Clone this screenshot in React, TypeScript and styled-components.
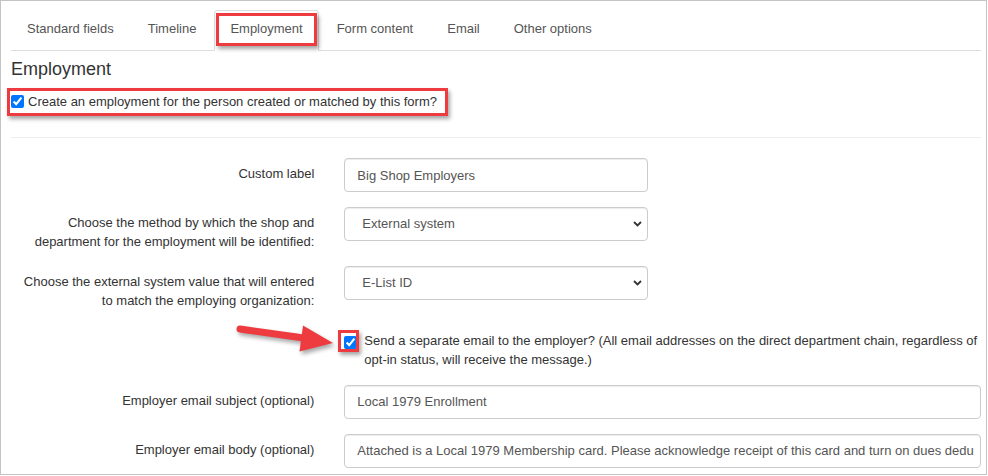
import React from "react";
import styled, { createGlobalStyle, css } from "styled-components";

const GlobalStyle = createGlobalStyle`
  html, body { margin: 0; padding: 0; background: #fff; }
  body {
    font-family: "Liberation Sans", Arial, Helvetica, sans-serif;
    font-size: 13px;
    line-height: 1.42857;
    color: #333;
  }
  *, *::before, *::after { box-sizing: border-box; }
`;

const Frame = styled.div`
  width: 987px;
  height: 475px;
  border: 1px solid #c4c4c4;
  padding: 9px 5px 0 10px;
  overflow: hidden;
  background: #fff;
`;

const Tabs = styled.ul`
  display: flex;
  list-style: none;
  margin: 0;
  padding: 0;
  border-bottom: 1px solid #ddd;
`;

const TabItem = styled.li`
  margin: 0 2px -1px 0;
`;

const TabLink = styled.a<{ $active?: boolean }>`
  position: relative;
  display: block;
  padding: 9px 15px 11px;
  border: 1px solid transparent;
  border-radius: 4px 4px 0 0;
  color: #555;
  text-decoration: none;
  cursor: pointer;
  ${(p) =>
    p.$active &&
    css`
      border-color: #ddd #ddd transparent;
      background: #fff;
    `}
`;

const Annot = styled.span<{ $t: number; $r: number; $b: number; $l: number }>`
  position: absolute;
  top: ${(p) => p.$t}px;
  right: ${(p) => p.$r}px;
  bottom: ${(p) => p.$b}px;
  left: ${(p) => p.$l}px;
  border: 3px solid #ee3b3f;
  box-shadow: 2px 3px 4px rgba(0, 0, 0, 0.35);
  pointer-events: none;
`;

const Heading = styled.h4`
  margin: 8px 0 14px;
  font-size: 18px;
  font-weight: normal;
  line-height: 20px;
  color: #333;
`;

const TopCheck = styled.label`
  position: relative;
  display: inline-flex;
  align-items: flex-start;
  gap: 4px;
  font-weight: normal;
  vertical-align: top;
`;

const CheckInput = styled.input<{ $mt: number }>`
  display: block;
  flex: none;
  width: 13px;
  height: 13px;
  margin: ${(p) => p.$mt}px 0 0;
`;

const Divider = styled.hr`
  margin: 26px 0 20px;
  border: 0;
  border-top: 1px solid #eee;
`;

const FormGroup = styled.div`
  display: grid;
  grid-template-columns: 333.333px 1fr;
  margin: 0 -15px 15px;
`;

const ControlLabel = styled.label`
  padding: 7px 15px 0;
  text-align: right;
  font-weight: normal;
  color: #333;
`;

const Control = styled.div<{ $padTop?: number }>`
  position: relative;
  padding: ${(p) => p.$padTop ?? 0}px 15px 0;
`;

const TextInput = styled.input<{ $narrow?: boolean }>`
  display: block;
  width: ${(p) => (p.$narrow ? "304px" : "100%")};
  height: 34px;
  padding: 6px 6px 6px 12px;
  font: inherit;
  color: #555;
  background: #fff;
  border: 1px solid #ccc;
  border-radius: 4px;
  box-shadow: inset 0 1px 1px rgba(0, 0, 0, 0.075);
  outline: none;
`;

const SelectWrap = styled.div`
  position: relative;
  width: 304px;
`;

const Select = styled.select`
  display: block;
  appearance: none;
  width: 100%;
  height: 34px;
  padding: 6px 24px 6px 17px;
  font: inherit;
  color: #555;
  background: #fff;
  border: 1px solid #ccc;
  border-radius: 4px;
  box-shadow: inset 0 1px 1px rgba(0, 0, 0, 0.075);
  outline: none;
`;

const Chevron = styled.svg`
  position: absolute;
  right: 6px;
  top: 14px;
  pointer-events: none;
`;

const CheckLabel = styled.label`
  display: grid;
  grid-template-columns: 20px 1fr;
  font-weight: normal;
  color: #333;
`;

const CheckBoxWrap = styled.span`
  position: relative;
  display: block;
  width: 13px;
  height: 13px;
  margin-top: 4px;
`;

const Arrow = styled.svg`
  position: absolute;
  left: -112px;
  top: -19px;
  overflow: visible;
  filter: drop-shadow(2px 3px 2px rgba(0, 0, 0, 0.35));
  pointer-events: none;
`;

const tabs = ["Standard fields", "Timeline", "Employment", "Form content", "Email", "Other options"];

function SelectField({ value }: { value: string }) {
  return (
    <SelectWrap>
      <Select defaultValue={value}>
        <option value={value}>{value}</option>
      </Select>
      <Chevron width="9" height="6" viewBox="0 0 9 6">
        <path d="M1 1l3.5 3.5L8 1" fill="none" stroke="#333" strokeWidth="1.8" />
      </Chevron>
    </SelectWrap>
  );
}

export default function App() {
  return (
    <>
      <GlobalStyle />
      <Frame>
        <Tabs>
          {tabs.map((t) => (
            <TabItem key={t}>
              <TabLink $active={t === "Employment"}>
                {t}
                {t === "Employment" && <Annot $t={2} $r={1} $b={4} $l={1} />}
              </TabLink>
            </TabItem>
          ))}
        </Tabs>

        <Heading>Employment</Heading>

        <TopCheck>
          <CheckInput type="checkbox" defaultChecked $mt={2} />
          <span>Create an employment for the person created or matched by this form?</span>
          <Annot $t={-5} $r={-11} $b={-5} $l={-4} />
        </TopCheck>

        <Divider />

        <FormGroup>
          <ControlLabel>Custom label</ControlLabel>
          <Control>
            <TextInput $narrow defaultValue="Big Shop Employers" />
          </Control>
        </FormGroup>

        <FormGroup>
          <ControlLabel>
            Choose the method by which the shop and
            <br />
            department for the employment will be identified:
          </ControlLabel>
          <Control>
            <SelectField value="External system" />
          </Control>
        </FormGroup>

        <FormGroup>
          <ControlLabel>
            Choose the external system value that will entered
            <br />
            to match the employing organization:
          </ControlLabel>
          <Control>
            <SelectField value="E-List ID" />
          </Control>
        </FormGroup>

        <FormGroup>
          <div />
          <Control $padTop={7}>
            <CheckLabel>
              <CheckBoxWrap>
                <CheckInput type="checkbox" defaultChecked $mt={0} />
                <Annot $t={-6} $r={-2} $b={-3} $l={-6} />
                <Arrow width="108" height="42" viewBox="232 318 108 42">
                  <line x1="240" y1="330" x2="304" y2="339" stroke="#ee3b3f" strokeWidth="7" strokeLinecap="round" />
                  <polygon points="303,326.5 333,344 299.5,352.5" fill="#ee3b3f" />
                </Arrow>
              </CheckBoxWrap>
              <span>
                Send a separate email to the employer? (All email addresses on the direct department chain, regardless of
                opt-in status, will receive the message.)
              </span>
            </CheckLabel>
          </Control>
        </FormGroup>

        <FormGroup>
          <ControlLabel>Employer email subject (optional)</ControlLabel>
          <Control>
            <TextInput defaultValue="Local 1979 Enrollment" />
          </Control>
        </FormGroup>

        <FormGroup>
          <ControlLabel>Employer email body (optional)</ControlLabel>
          <Control>
            <TextInput defaultValue="Attached is a Local 1979 Membership card. Please acknowledge receipt of this card and turn on dues deduction." />
          </Control>
        </FormGroup>
      </Frame>
    </>
  );
}
